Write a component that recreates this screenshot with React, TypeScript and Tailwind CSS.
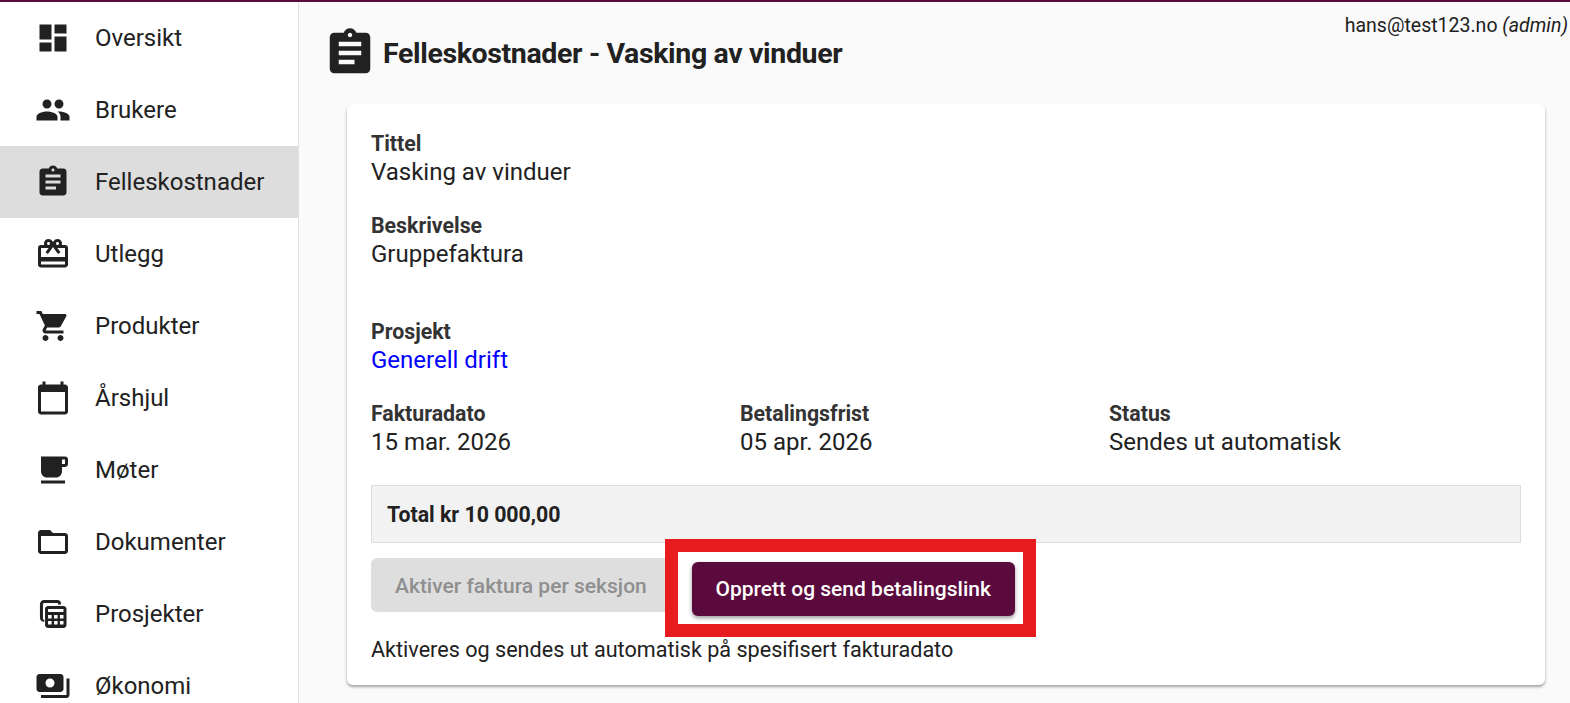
const navItems = [
  { label: 'Oversikt', d: 'M3 13h8V3H3v10zm0 8h8v-6H3v6zm10 0h8V11h-8v10zm0-18v6h8V3h-8z' },
  {
    label: 'Brukere',
    d: 'M16 11c1.66 0 2.99-1.34 2.99-3S17.66 5 16 5c-1.66 0-3 1.34-3 3s1.34 3 3 3zm-8 0c1.66 0 2.99-1.34 2.99-3S9.66 5 8 5C6.34 5 5 6.34 5 8s1.34 3 3 3zm0 2c-2.33 0-7 1.17-7 3.5V19h14v-2.5c0-2.33-4.67-3.5-7-3.5zm8 0c-.29 0-.62.02-.97.05 1.16.84 1.97 1.97 1.97 3.45V19h6v-2.5c0-2.33-4.67-3.5-7-3.5z',
  },
  {
    label: 'Felleskostnader',
    active: true,
    d: 'M19 3h-4.18C14.4 1.84 13.3 1 12 1c-1.3 0-2.4.84-2.82 2H5c-1.1 0-2 .9-2 2v14c0 1.1.9 2 2 2h14c1.1 0 2-.9 2-2V5c0-1.1-.9-2-2-2zm-7 0c.55 0 1 .45 1 1s-.45 1-1 1-1-.45-1-1 .45-1 1-1zm2 14H7v-2h7v2zm3-4H7v-2h10v2zm0-4H7V7h10v2z',
  },
  {
    label: 'Utlegg',
    d: 'M20 6h-2.18c.11-.31.18-.65.18-1 0-1.66-1.34-3-3-3-1.05 0-1.96.54-2.5 1.35l-.5.67-.5-.68C10.96 2.54 10.05 2 9 2 7.34 2 6 3.34 6 5c0 .35.07.69.18 1H4c-1.11 0-1.99.89-1.99 2L2 19c0 1.11.89 2 2 2h16c1.11 0 2-.89 2-2V8c0-1.11-.89-2-2-2zm-5-2c.55 0 1 .45 1 1s-.45 1-1 1-1-.45-1-1 .45-1 1-1zM9 4c.55 0 1 .45 1 1s-.45 1-1 1-1-.45-1-1 .45-1 1-1zm11 15H4v-2h16v2zm0-5H4V8h5.08L7 10.83 8.62 12 11 8.76l1-1.36 1 1.36L15.38 12 17 10.83 14.92 8H20v6z',
  },
  {
    label: 'Produkter',
    d: 'M7 18c-1.1 0-1.99.9-1.99 2S5.9 22 7 22s2-.9 2-2-.9-2-2-2zM1 2v2h2l3.6 7.59-1.35 2.45c-.16.28-.25.61-.25.96 0 1.1.9 2 2 2h12v-2H7.42c-.14 0-.25-.11-.25-.25l.03-.12.9-1.63h7.45c.75 0 1.41-.41 1.75-1.03l3.58-6.49c.08-.14.12-.31.12-.48 0-.55-.45-1-1-1H5.21l-.94-2H1zm16 16c-1.1 0-1.99.9-1.99 2s.89 2 1.99 2 2-.9 2-2-.9-2-2-2z',
  },
  {
    label: 'Årshjul',
    d: 'M20 3h-1V1h-2v2H7V1H5v2H4c-1.1 0-2 .9-2 2v16c0 1.1.9 2 2 2h16c1.1 0 2-.9 2-2V5c0-1.1-.9-2-2-2zm0 18H4V8h16v13z',
  },
  {
    label: 'Møter',
    d: 'M20 3H4v10c0 2.21 1.79 4 4 4h6c2.21 0 4-1.79 4-4v-3h2c1.11 0 2-.89 2-2V5c0-1.11-.89-2-2-2zm0 5h-2V5h2v3zM4 19h16v2H4z',
  },
  {
    label: 'Dokumenter',
    d: 'M20 6h-8l-2-2H4c-1.1 0-1.99.9-1.99 2L2 18c0 1.1.9 2 2 2h16c1.1 0 2-.9 2-2V8c0-1.1-.9-2-2-2zm0 12H4V8h16v10z',
  },
  {
    label: 'Prosjekter',
    d: 'M6 2.7h9c1.3 0 2.3 1 2.3 2v1h-2v-1H6.2c-.5 0-.9.4-.9.9V15c0 .5.4.9.9.9v1.4c-1.6 0-2.9-1.1-2.9-2.6V5.5c0-1.6 1.3-2.8 2.7-2.8zM8.7 6.7H19c1.1 0 2 .9 2 2v10.6c0 1.1-.9 2-2 2H8.7c-1.1 0-2-.9-2-2V8.7c0-1.1.9-2 2-2zm0 2v2h10.3v-2zm0 3.9V15h2.4v-2.4zm3.95 0V15h2.4v-2.4zm3.95 0V15H19v-2.4zm-7.9 4V19h2.4v-2.4zm3.95 0V19h2.4v-2.4zm3.95 0V19H19v-2.4z',
  },
  {
    label: 'Økonomi',
    d: 'M19 14V6c0-1.1-.9-2-2-2H3c-1.1 0-2 .9-2 2v8c0 1.1.9 2 2 2h14c1.1 0 2-.9 2-2zm-9-1c-1.66 0-3-1.34-3-3s1.34-3 3-3 3 1.34 3 3-1.34 3-3 3zm13-6v11c0 1.1-.9 2-2 2H4v-2h17V7h2z',
  },
];

function Icon({ d, className }: { d: string; className: string }) {
  return (
    <svg viewBox="0 0 24 24" fill="#212121" fillRule="evenodd" className={className}>
      <path d={d} />
    </svg>
  );
}

function Field({ label, value, className }: { label: string; value: string; className?: string }) {
  return (
    <div className={className}>
      <div className="text-[21.3px] leading-[28px] font-bold text-[#333333]">{label}</div>
      <div className="text-[24px] leading-[28px]">{value}</div>
    </div>
  );
}

export default function App() {
  return (
    <div className="h-[703px] overflow-hidden flex flex-col bg-[#fafafa] text-[#212121] font-['Roboto',sans-serif]">
      <div className="h-[2px] shrink-0 bg-[#5a0a3c]" />
      <div className="flex flex-1 min-h-0">
        {/* Sidebar */}
        <nav className="w-[299px] shrink-0 bg-white border-r border-[#e0e0e0] overflow-hidden">
          {navItems.map((item) => (
            <div
              key={item.label}
              className={`h-[72px] flex items-center pl-[35px] ${item.active ? 'bg-[#dddddd]' : ''}`}
            >
              <Icon d={item.d} className="w-[36px] h-[36px] shrink-0" />
              <span className="ml-[24px] text-[24px]">{item.label}</span>
            </div>
          ))}
        </nav>

        {/* Main */}
        <main className="flex-1 min-w-0 pl-[24px] pr-[2px]">
          <div className="flex justify-between items-start">
            <div className="flex items-center pt-[24px]">
              <Icon d={navItems[2].d} className="w-[54px] h-[54px] shrink-0" />
              <h1 className="ml-[6px] pt-[3px] text-[28.5px] tracking-[-0.36px] font-bold">
                Felleskostnader - Vasking av vinduer
              </h1>
            </div>
            <div className="text-[19.5px] leading-[24px] pt-[12px]">
              hans@test123.no <i>(admin)</i>
            </div>
          </div>

          <section className="mt-[24px] ml-[24px] w-[1198px] h-[581px] rounded-[6px] bg-white shadow-[0_2px_3px_rgba(0,0,0,0.35)] px-[24px] pt-[26px]">
            <Field label="Tittel" value="Vasking av vinduer" />
            <Field label="Beskrivelse" value="Gruppefaktura" className="mt-[26px]" />
            <div className="mt-[50px]">
              <div className="text-[21.3px] leading-[28px] font-bold text-[#333333]">Prosjekt</div>
              <a className="text-[24px] leading-[28px] text-[#0000ff]">Generell drift</a>
            </div>
            <div className="mt-[25px] grid grid-cols-[369px_369px_1fr]">
              <Field label="Fakturadato" value="15 mar. 2026" />
              <Field label="Betalingsfrist" value="05 apr. 2026" />
              <Field label="Status" value="Sendes ut automatisk" />
            </div>

            <div className="mt-[29px] w-[1150px] h-[58px] flex items-center pl-[15px] pt-[2px] bg-[#f2f2f2] border border-[#dddddd] text-[21.3px] font-bold">
              Total kr 10 000,00
            </div>

            <div className="mt-[15px] flex items-start">
              <button className="h-[54px] px-[24px] pt-[3px] rounded-[6px] bg-[#dedede] text-[#8f8f8f] text-[21px] font-medium">
                Aktiver faktura per seksjon
              </button>
              <div className="relative ml-[21px] mt-[4px]">
                <div className="absolute -left-[27px] -right-[21px] -top-[23px] -bottom-[21px] bg-white border-[13px] border-[#e81c1f]" />
                <button className="relative h-[54px] w-[323px] pt-[2px] rounded-[6px] bg-[#5a0a3c] text-white text-[21px] font-medium shadow-[0_2px_4px_rgba(0,0,0,0.4)]">
                  Opprett og send betalingslink
                </button>
              </div>
            </div>

            <p className="mt-[20px] text-[21.6px] leading-[28px]">Aktiveres og sendes ut automatisk på spesifisert fakturadato</p>
          </section>
        </main>
      </div>
    </div>
  );
}
